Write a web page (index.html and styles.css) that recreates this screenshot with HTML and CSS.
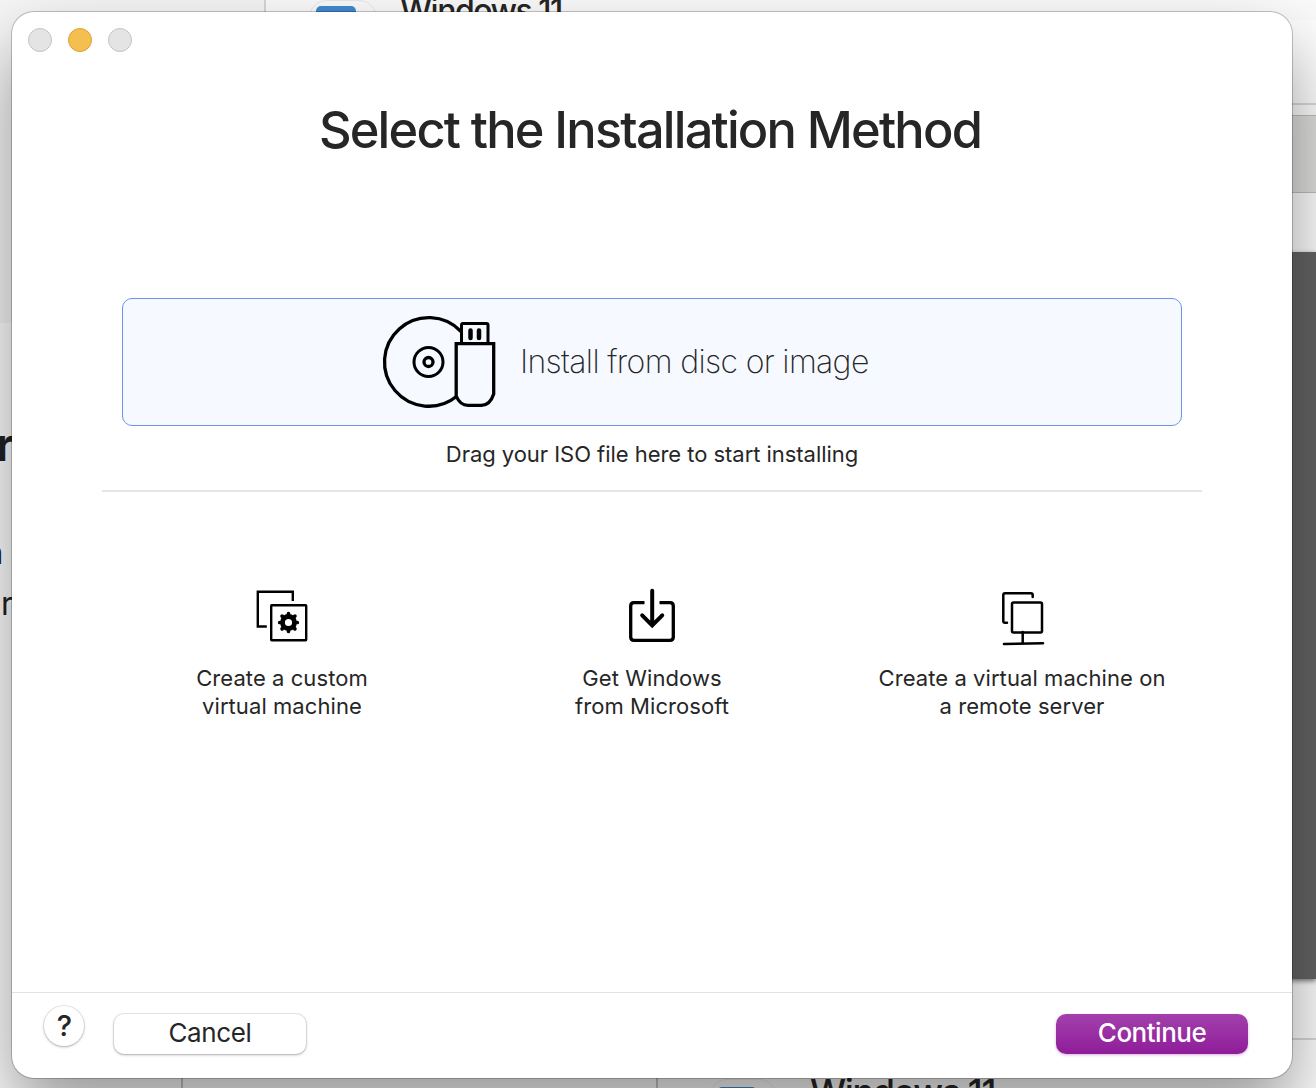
FILE: index.html
```html
<!DOCTYPE html>
<html lang="en">
<head>
<meta charset="utf-8">
<title>Select the Installation Method</title>
<link rel="stylesheet" href="styles.css">
</head>
<body>
<div class="desktop" aria-hidden="true">
  <div class="bg side-top"></div>
  <div class="bg divider-top"></div>
  <div class="bg app-tile tile-top"><span class="app-screen"></span></div>
  <div class="bg bg-title title-top">Windows 11</div>
  <div class="bg bg-r bold-r">r</div>
  <div class="bg bg-r small-n">n</div>
  <div class="bg bg-r small-r">r</div>
  <div class="bg right-line"></div>
  <div class="bg right-bar"></div>
  <div class="bg right-dark"></div>
  <div class="bg right-low-line"></div>
  <div class="bg divider-a"></div>
  <div class="bg divider-b"></div>
  <div class="bg app-tile tile-bottom"><span class="app-screen"></span></div>
  <div class="bg bg-title title-bottom">Windows 11</div>
</div>
<main class="window">
  <div class="titlebar"><span class="light"></span><span class="light minimize"></span><span class="light"></span></div>
  <h1><span>Select the Installation Method</span></h1>
  <section class="content">
    <button class="drop">
      <svg class="disc" width="116" height="96" viewBox="0 0 116 96" fill="none" stroke="#000" stroke-width="3.300">
        <path d="M80 17.500A44.300 44.300 0 1 0 75.500 82.500"/>
        <circle cx="47.500" cy="48" r="14.500" stroke-width="3"/><circle cx="47.500" cy="48" r="4.500"/>
        <path d="M80.500 29V11q0-1.500 1.500-1.500H105.500q1.500 0 1.500 1.500V29" stroke-width="3"/>
        <path d="M75.200 29.700H112.700V80Q109 91.300 100.500 91.300H87Q79 91.300 75.200 82Z"/>
        <path d="M89.500 16.500V24M98 16.500V24" stroke-width="4.500" stroke-linecap="round"/>
      </svg>
      <span class="drop-label">Install from disc or image</span>
    </button>
    <p class="hint"><span>Drag your ISO file here to start installing</span></p>
    <hr>
    <div class="options">
      <div class="option">
        <svg width="60" height="60" viewBox="252 586 60 60" fill="none" stroke="#000" stroke-width="2.400">
          <path d="M266.800 626.500H257.800V591.800H292.800V601"/>
          <rect x="271.200" y="605.200" width="35" height="35" rx=".5"/>
          <circle cx="288.500" cy="622.500" r="6" stroke-width="4.800"/>
          <path d="M288.500 615V613.700M288.500 630V631.300M281 622.500H279.700M296 622.500H297.300M283.200 617.200L282.100 616.100M293.800 627.800L294.900 628.900M293.800 617.200L294.900 616.100M283.200 627.800L282.100 628.900" stroke-width="3.700" stroke-linecap="round"/>
        </svg>
        <p><span>Create a custom</span><span>virtual machine</span></p>
      </div>
      <div class="option">
        <svg width="60" height="60" viewBox="622 586 60 60" fill="none" stroke="#000" stroke-width="3.300">
          <path d="M644.500 602.700H634Q630.700 602.700 630.700 606V637Q630.700 640.300 634 640.300H670Q673.300 640.300 673.300 637V606Q673.300 602.700 670 602.700H659.500"/>
          <path d="M652.200 590.800V625M642.200 615.300L652.200 625.500L662.200 615.300" stroke-width="4" stroke-linecap="round"/>
        </svg>
        <p><span>Get Windows</span><span>from Microsoft</span></p>
      </div>
      <div class="option">
        <svg width="60" height="60" viewBox="992 586 60 60" fill="none" stroke="#000" stroke-width="2.500" stroke-linecap="round">
          <path d="M1007 622.800H1005Q1003.300 622.800 1003.300 621V595Q1003.300 593.300 1005 593.300H1031Q1032.700 593.300 1032.700 595V597"/>
          <rect x="1012" y="602.500" width="30" height="30" rx="1.500"/>
          <path d="M1022.700 632V643.500M1004 644L1043 643.200"/>
        </svg>
        <p><span>Create a virtual machine on</span><span>a remote server</span></p>
      </div>
    </div>
  </section>
  <footer>
    <button class="help">?</button>
    <button class="cancel">Cancel</button>
    <button class="continue">Continue</button>
  </footer>
</main>
</body>
</html>
```
FILE: styles.css
```css
* { box-sizing: border-box; }
body { margin: 0; width: 1316px; height: 1088px; overflow: hidden; background: #fdfdfd; color: #262626; font-family: Inter, "Liberation Sans", sans-serif; }
button { font: inherit; color: inherit; border: 0; margin: 0; padding: 0; }
h1, p { margin: 0; }
svg { display: block; }

.desktop { position: absolute; inset: 0; overflow: hidden; }
.bg { position: absolute; line-height: 1; }
.side-top { left: 0; top: 0; width: 266px; height: 323px; background: #f5f5f5; border-right: 2px solid #d5d5d5; }
.divider-top { left: 266px; top: 0; width: 1050px; height: 20px; background: #fafafa; }
.app-tile { width: 68px; height: 68px; border: 1px solid #e9e9e9; border-radius: 18px; }
.tile-top { left: 309px; top: 0; }
.tile-bottom { left: 709px; top: 1079px; border-color: #eee; }
.app-screen { display: block; width: 40px; height: 30px; margin: 5px 0 0 6px; border-radius: 5px; background: #4189d0; }
.tile-bottom .app-screen { margin: 7px 0 0 7px; }
.bg-title { font-size: 32px; font-weight: 500; white-space: nowrap; letter-spacing: -1.5px; }
.title-top { left: 400px; top: -5px; }
.title-bottom { left: 810px; top: 1074px; font-size: 36px; letter-spacing: -1.4px; }
.bg-r { right: 1304px; color: #222; }
.bold-r { font-size: 45px; font-weight: 700; top: 422px; right: 1302px; }
.small-n { font-size: 32px; font-weight: 600; top: 537px; right: 1313px; }
.small-r { font-size: 32px; top: 588px; right: 1303px; }
.right-line { left: 1280px; top: 103px; width: 36px; height: 2px; background: #dadada; }
.right-bar { left: 1280px; top: 115px; width: 36px; height: 78px; background: #dededc; border: solid #bdbdbd; border-width: 1px 0; }
.right-dark { left: 1280px; top: 252px; width: 36px; height: 727px; background: #646464; box-shadow: 0 2px 5px #777; }
.right-low-line { left: 1280px; top: 1038px; width: 36px; height: 2px; background: #d8d8d8; }
.divider-a, .divider-b { top: 1070px; width: 2px; height: 18px; background: #c5c5c5; }
.divider-a { left: 181px; }
.divider-b { left: 656px; }

.window { position: relative; width: 1280px; height: 1066px; margin: 12px 0 0 12px; display: flex; flex-direction: column; border-radius: 22px; background: #fff; box-shadow: 0 0 0 1px rgba(0,0,0,.22), 0 36px 70px rgba(0,0,0,.4); }
.titlebar { display: flex; gap: 16px; padding: 16px 16px 0; height: 87px; }
.light { width: 24px; height: 24px; border: 1px solid #c4c4c4; border-radius: 50%; background: #e4e4e4; }
.minimize { background: #f5bf4f; border-color: #dba03a; }
h1 { display: flex; justify-content: center; height: 199px; font-size: 50.500px; line-height: 62px; font-weight: 470; white-space: nowrap; letter-spacing: -1.800px; }
h1 span { margin-right: 4px; }
.content { padding: 0 90px; flex: 1; }
.drop { width: 1060px; height: 128px; margin: 0 20px; display: flex; align-items: center; padding-left: 258px; border: 1px solid #6797e1; border-radius: 10px; background: #f6f9ff; }
.drop-label { margin: -2px 0 0 23px; font-size: 32px; font-weight: 250; white-space: nowrap; letter-spacing: -.66px; }
.hint { height: 64px; padding-top: 14px; text-align: center; font-size: 22px; line-height: 28px; white-space: nowrap; letter-spacing: -.04px; }
hr { height: 2px; margin: 0; border: 0; background: #e5e5e5; }
.options { display: grid; grid-template-columns: repeat(3, 370px); justify-content: center; padding-top: 94px; }
.option { display: flex; flex-direction: column; align-items: center; }
.option p { display: flex; flex-direction: column; align-items: center; margin-top: 18px; font-size: 22px; line-height: 28px; white-space: nowrap; letter-spacing: .07px; }
footer { display: flex; height: 86px; padding: 0 44px 0 32px; border-top: 1px solid #e2e2e2; }
.help, .cancel { background: #fff; box-shadow: 0 0 0 1px rgba(0,0,0,.07), 0 1px 3px rgba(0,0,0,.28); }
.help { width: 40px; height: 40px; margin-top: 13px; border-radius: 50%; font-size: 29px; font-weight: 500; line-height: 40px; padding-left: 1px; }
.cancel, .continue { width: 192px; height: 40px; margin-top: 21px; border-radius: 10px; font-size: 26px; line-height: 36px; padding-bottom: 2px; letter-spacing: -.35px; }
.cancel { margin-left: 30px; }
.continue { margin-left: auto; color: #fff; font-weight: 500; letter-spacing: -.5px; background: linear-gradient(#a340ad, #8e1d99); box-shadow: 0 1px 3px rgba(142,29,153,.35); }
```
